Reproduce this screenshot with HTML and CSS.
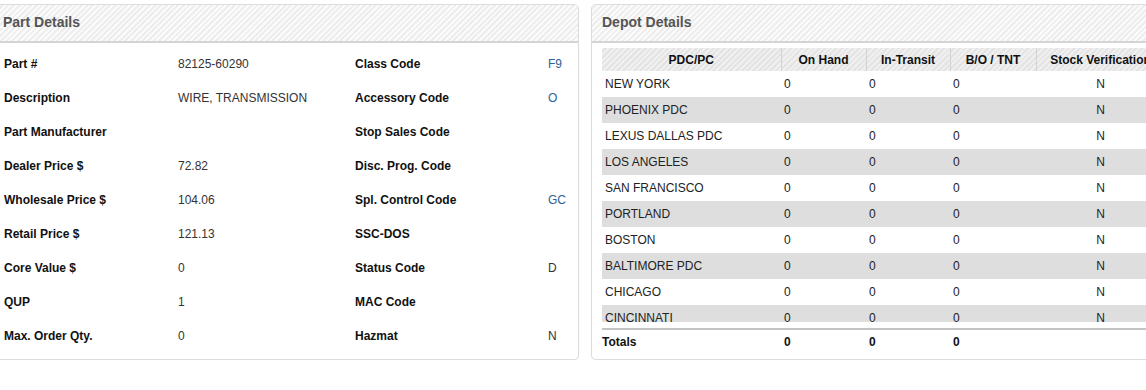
FILE: index.html
```html
<!DOCTYPE html>
<html>
<head>
<meta charset="utf-8">
<link rel="stylesheet" href="styles.css">
</head>
<body>
<div class="page">
  <section class="panel part-panel">
    <header class="panel-head">Part Details</header>
    <div class="part-body">
      <div class="lbl">Part #</div><div class="val">82125-60290</div><div class="lbl">Class Code</div><div class="val link">F9</div>
      <div class="lbl">Description</div><div class="val">WIRE, TRANSMISSION</div><div class="lbl">Accessory Code</div><div class="val link">O</div>
      <div class="lbl">Part Manufacturer</div><div class="val"></div><div class="lbl">Stop Sales Code</div><div class="val"></div>
      <div class="lbl">Dealer Price $</div><div class="val">72.82</div><div class="lbl">Disc. Prog. Code</div><div class="val"></div>
      <div class="lbl">Wholesale Price $</div><div class="val">104.06</div><div class="lbl">Spl. Control Code</div><div class="val link">GC</div>
      <div class="lbl">Retail Price $</div><div class="val">121.13</div><div class="lbl">SSC-DOS</div><div class="val"></div>
      <div class="lbl">Core Value $</div><div class="val">0</div><div class="lbl">Status Code</div><div class="val">D</div>
      <div class="lbl">QUP</div><div class="val">1</div><div class="lbl">MAC Code</div><div class="val"></div>
      <div class="lbl">Max. Order Qty.</div><div class="val">0</div><div class="lbl">Hazmat</div><div class="val">N</div>
    </div>
  </section>
  <section class="panel depot-panel">
    <header class="panel-head">Depot Details</header>
    <div class="depot-body">
      <div class="scroll">
        <table class="grid">
          <colgroup><col class="c1"><col class="c2"><col class="c3"><col class="c4"><col class="c5"></colgroup>
          <thead>
            <tr><th>PDC/PC</th><th>On Hand</th><th>In-Transit</th><th>B/O / TNT</th><th>Stock Verification</th></tr>
          </thead>
          <tbody>
            <tr><td>NEW YORK</td><td>0</td><td>0</td><td>0</td><td class="ctr">N</td></tr>
            <tr><td>PHOENIX PDC</td><td>0</td><td>0</td><td>0</td><td class="ctr">N</td></tr>
            <tr><td>LEXUS DALLAS PDC</td><td>0</td><td>0</td><td>0</td><td class="ctr">N</td></tr>
            <tr><td>LOS ANGELES</td><td>0</td><td>0</td><td>0</td><td class="ctr">N</td></tr>
            <tr><td>SAN FRANCISCO</td><td>0</td><td>0</td><td>0</td><td class="ctr">N</td></tr>
            <tr><td>PORTLAND</td><td>0</td><td>0</td><td>0</td><td class="ctr">N</td></tr>
            <tr><td>BOSTON</td><td>0</td><td>0</td><td>0</td><td class="ctr">N</td></tr>
            <tr><td>BALTIMORE PDC</td><td>0</td><td>0</td><td>0</td><td class="ctr">N</td></tr>
            <tr><td>CHICAGO</td><td>0</td><td>0</td><td>0</td><td class="ctr">N</td></tr>
            <tr><td>CINCINNATI</td><td>0</td><td>0</td><td>0</td><td class="ctr">N</td></tr>
          </tbody>
        </table>
      </div>
      <table class="grid totals">
        <colgroup><col class="c1"><col class="c2"><col class="c3"><col class="c4"><col class="c5"></colgroup>
        <tbody>
          <tr><td class="tl">Totals</td><td>0</td><td>0</td><td>0</td><td></td></tr>
        </tbody>
      </table>
    </div>
  </section>
</div>
</body>
</html>
```

FILE: styles.css
```css
html, body {
  margin: 0;
  padding: 0;
  background: #fff;
  overflow: hidden;
}
body {
  font-family: "Liberation Sans", Arial, sans-serif;
  font-size: 12px;
  color: #222;
}
.page {
  display: flex;
  gap: 12px;
  align-items: flex-start;
  margin-left: -8px;
  padding-top: 4px;
  width: 1190px;
}
.panel {
  flex: 0 0 587px;
  width: 587px;
  box-sizing: border-box;
  border: 1px solid #dcdcdc;
  border-radius: 5px;
  background: #fff;
  box-shadow: 0 1px 2px rgba(0,0,0,0.06);
  overflow: hidden;
  height: 356px;
}
.panel-head {
  height: 36px;
  line-height: 34px;
  padding: 0 10px;
  font-size: 14px;
  font-weight: bold;
  color: #555;
  background-color: #f3f3f3;
  background-image: repeating-linear-gradient(135deg, rgba(255,255,255,0.7) 0 2px, rgba(0,0,0,0.025) 2px 4px);
  border-bottom: 2px solid #d4d4d4;
}
.part-body {
  display: grid;
  grid-template-columns: 174px 177px 193px 1fr;
  grid-auto-rows: 34px;
  align-items: center;
  padding: 4px 12px 0 11px;
}
.lbl {
  font-weight: bold;
  color: #111;
}
.val {
  color: #333;
}
.val.link {
  color: #2d6198;
}
.depot-body {
  padding: 5px 12px 0 10px;
}
.scroll {
  height: 274px;
  overflow: hidden;
}
.grid {
  border-collapse: collapse;
  table-layout: fixed;
  width: 563px;
}
.c1 { width: 179px; }
.c2 { width: 85px; }
.c3 { width: 84px; }
.c4 { width: 86px; }
.c5 { width: 129px; }
.grid th {
  height: 23px;
  padding: 0 3px;
  font-weight: bold;
  color: #111;
  text-align: center;
  white-space: nowrap;
  overflow: hidden;
  background-color: #e8e8e8;
  background-image: repeating-linear-gradient(135deg, rgba(255,255,255,0.35) 0 2px, rgba(0,0,0,0.02) 2px 4px);
  border-right: 1px solid #d2d2d2;
}
.grid td {
  height: 26px;
  padding: 0 3px;
  color: #222;
  white-space: nowrap;
}
.grid tbody tr:nth-child(even) td {
  background: #dedede;
}
.grid td.ctr {
  text-align: center;
}
.totals {
  margin-top: 6px;
  border-top: 2px solid #c4c4c4;
}
.totals td {
  height: 24px;
  font-weight: bold;
  color: #111;
}
.totals tbody tr td {
  background: none;
}
.totals td.tl {
  padding-left: 0;
}
```
